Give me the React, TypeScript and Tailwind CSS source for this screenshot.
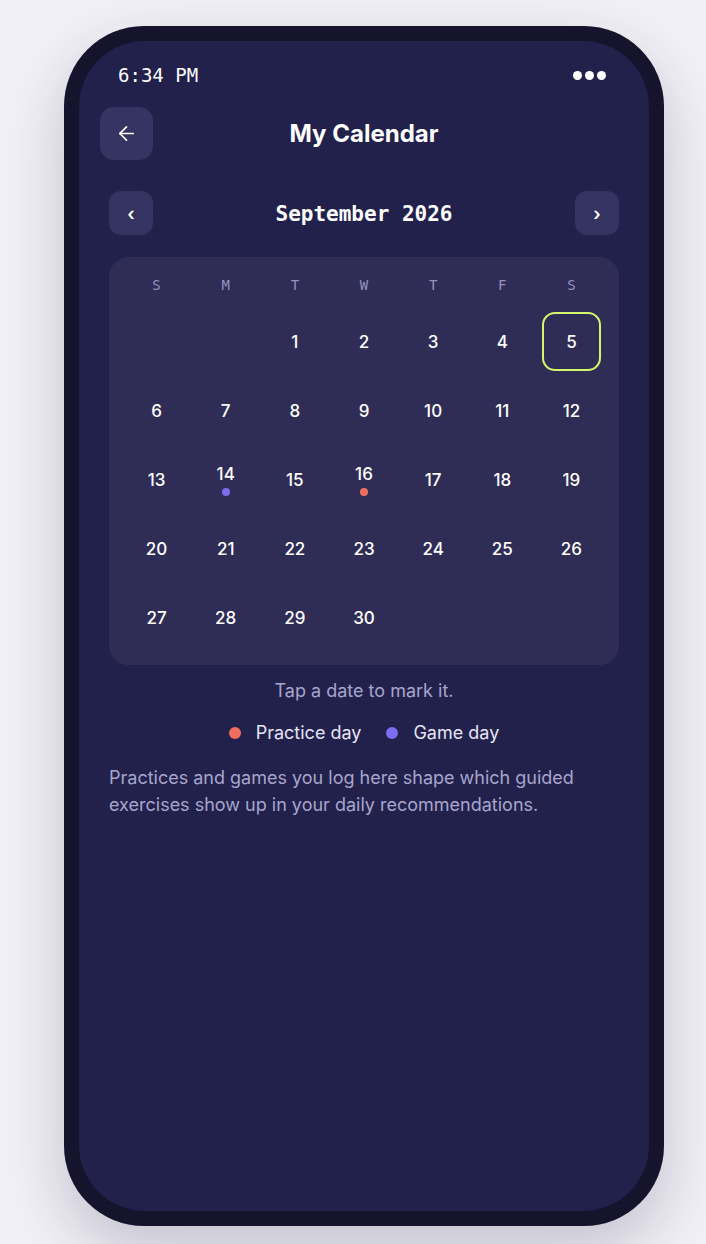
import React from "react";
import { ArrowLeft } from "lucide-react";

const WEEKDAYS = ["S", "M", "T", "W", "T", "F", "S"];

type Mark = "practice" | "game";

const MARKS: Record<number, Mark> = {
	14: "game",
	16: "practice",
};

const SELECTED = 5;
// September 2026 starts on a Tuesday
const LEADING_BLANKS = 2;
const DAYS_IN_MONTH = 30;

const mono = "font-['DejaVu_Sans_Mono',monospace]";
const sans = "font-['Inter','Noto_Sans',sans-serif]";

function DayCell({ day }: { day: number | null }) {
	if (day === null) return <div className="h-[59px]" />;
	const mark = MARKS[day];
	const selected = day === SELECTED;
	return (
		<button
			className={`h-[59px] flex flex-col items-center justify-center gap-[4px] rounded-[13px] text-white text-[17px] font-medium leading-[20px] ${
				selected ? "border-2 border-[#d3f66c]" : "border-2 border-transparent"
			}`}
		>
			<span>{day}</span>
			{mark && (
				<span
					className={`w-[8px] h-[8px] rounded-full ${mark === "game" ? "bg-[#7b6cf0]" : "bg-[#ee6f5b]"}`}
				/>
			)}
		</button>
	);
}

function CalendarCard() {
	const cells: (number | null)[] = [];
	for (let i = 0; i < LEADING_BLANKS; i++) cells.push(null);
	for (let d = 1; d <= DAYS_IN_MONTH; d++) cells.push(d);

	return (
		<div className="mt-[22px] rounded-[20px] bg-[#2f2d56] p-[18px]">
			<div className="grid grid-cols-7 gap-x-[10px] mb-[17px]">
				{WEEKDAYS.map((w, i) => (
					<div key={i} className={`${mono} h-[20px] leading-[20px] text-center text-[14px] text-[#9592c0]`}>
						{w}
					</div>
				))}
			</div>
			<div className="grid grid-cols-7 gap-[10px]">
				{cells.map((d, i) => (
					<DayCell key={i} day={d} />
				))}
			</div>
		</div>
	);
}

export default function App() {
	return (
		<div className={`${sans} min-h-screen bg-[#f1f0f6] pt-[26px] pl-[64px]`}>
			<div className="w-[600px] h-[1200px] rounded-[80px] bg-[#15142c] p-[15px] shadow-[0_24px_60px_rgba(30,30,70,0.22)]">
				<div className="h-full rounded-[66px] bg-[#22214b] overflow-hidden">
					{/* status bar */}
					<div className="flex items-center justify-between pt-[24px] pl-[39px] pr-[43px]">
						<span className={`${mono} text-[19px] leading-[20px] text-white`}>6:34 PM</span>
						<div className="flex gap-[3px]">
							<span className="w-[9px] h-[9px] rounded-full bg-white" />
							<span className="w-[9px] h-[9px] rounded-full bg-white" />
							<span className="w-[9px] h-[9px] rounded-full bg-white" />
						</div>
					</div>

					{/* header */}
					<div className="mt-[22px] px-[21px] grid grid-cols-[53px_1fr_53px] items-center">
						<button className="w-[53px] h-[53px] rounded-[14px] bg-[#363462] flex items-center justify-center text-white">
							<ArrowLeft size={23} strokeWidth={1.75} />
						</button>
						<h1 className="text-center text-white text-[24px] leading-[30px] font-bold">My Calendar</h1>
						<div />
					</div>

					<div className="px-[30px]">
						{/* month nav */}
						<div className="mt-[31px] flex items-center justify-between">
							<button className="w-[44px] h-[44px] rounded-[12px] bg-[#353361] text-white text-[18px] font-semibold flex items-center justify-center">
								‹
							</button>
							<span className={`${mono} text-white text-[21px] font-bold pt-[4px]`}>September 2026</span>
							<button className="w-[44px] h-[44px] rounded-[12px] bg-[#353361] text-white text-[18px] font-semibold flex items-center justify-center">
								›
							</button>
						</div>

						<CalendarCard />

						<p className="mt-[14px] text-center text-[18px] leading-[24px] text-[#a8a5cd]">Tap a date to mark it.</p>

						<div className="mt-[18px] flex items-center justify-center gap-[25px] text-[18px] leading-[24px] text-[#e6e4f4]">
							<div className="flex items-center gap-[15px]">
								<span className="w-[12px] h-[12px] rounded-full bg-[#ee6f5b]" />
								<span>Practice day</span>
							</div>
							<div className="flex items-center gap-[15px]">
								<span className="w-[12px] h-[12px] rounded-full bg-[#7b6cf0]" />
								<span>Game day</span>
							</div>
						</div>

						<p className="mt-[19px] text-[18px] leading-[27px] text-[#a8a5cd]">
							Practices and games you log here shape which guided exercises show up in your daily recommendations.
						</p>
					</div>
				</div>
			</div>
		</div>
	);
}
